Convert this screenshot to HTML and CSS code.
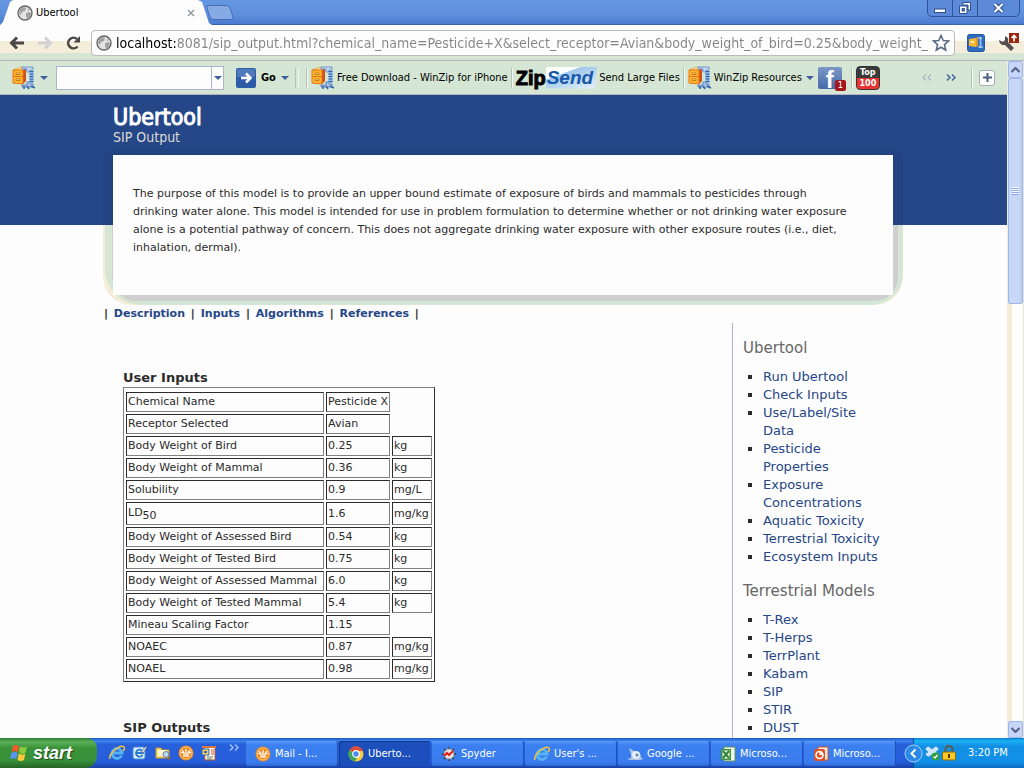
FILE: index.html
```html
<!DOCTYPE html>
<html lang="en">
<head>
<meta charset="utf-8">
<title>Ubertool</title>
<link rel="stylesheet" href="styles.css">
</head>
<body>
<svg class="defs" aria-hidden="true">
  <symbol id="winzip" viewBox="0 0 24 24">
    <path d="M1 4 9 1l5 1-2 2z" fill="#ffe9a0" stroke="#e58a1c" stroke-width=".6"/><path d="M1 4l10 0v14L1 17z" fill="#ffb52a"/><path d="M11 4l3-2v13l-3 3z" fill="#d1501a"/>
    <path d="M1 4v13l10 1V4zM1 10.500h10" stroke="#e8741a" fill="none"/><path d="M4 7h4v1.500H4zM4 13h4v1.500H4z" fill="#fff4b0" stroke="#b86a10" stroke-width=".8"/>
    <path d="M10 1h11v3h-3v2h-3V3h-5z" fill="#c4d9f3" stroke="#5d84be" stroke-width=".8"/><path d="M15 16h3v2h3v3H10v-2h5z" fill="#a9c6ea" stroke="#4a74b4" stroke-width=".8"/>
    <path d="M19.500 5v12" stroke="#8db4e6" stroke-width="4"/><path d="M19.500 5v12" stroke="#2d5fae" stroke-width="4" stroke-dasharray="1 1.500"/><path d="M12 20v3M15 20l2 3M19 20l4 2" stroke="#3563ad" stroke-width="1.500"/>
  </symbol>
  <symbol id="globe" viewBox="0 0 16 16">
    <circle cx="8" cy="8" r="7" fill="#e4e4e4" stroke="#666" stroke-width="1.4"/><path d="M3 4l4-2 2 1-1 3-3 1-1 3-2-2zM9 8l4-1 1 2-2 4-2 1-1-3zM11 3l2 2-2 1z" fill="#a2a2a2"/>
  </symbol>
  <symbol id="ie" viewBox="0 0 16 16">
    <path d="M12.6 10.5A5 5 0 1 1 13 8H4" fill="none" stroke="#55b4f4" stroke-width="2.8"/><path d="M1 14C-1 9 11-1 15 2c1 1 0 3-1 4" fill="none" stroke="#f5c33b" stroke-width="1.5"/>
  </symbol>
  <symbol id="mail" viewBox="0 0 16 16">
    <circle cx="8" cy="8" r="7.5" fill="#f08a1d"/><circle cx="8" cy="8" r="6" fill="none" stroke="#ffc77c"/><path d="M4 5l2 3v4M8 4v8M12 5l-2 3v4M3 8l3-1M13 8l-3-1" stroke="#fff" stroke-width="1.3" fill="none"/>
  </symbol>
</svg>

<div class="window">
  <header class="titlebar">
    <div class="tab"><svg class="i16"><use href="#globe"/></svg><span class="tab-name">Ubertool</span>
      <button class="plain" aria-label="Close tab"><svg width="8" height="8" viewBox="0 0 8 8"><path d="M1 1l6 6M7 1L1 7" stroke="#8c929c" stroke-width="1.3"/></svg></button></div>
    <button class="newtab" aria-label="New tab"></button>
    <div class="controls">
      <button aria-label="Minimize"><svg width="12" height="12" viewBox="0 0 12 12"><rect x=".5" y="7" width="11" height="3.5" fill="#fff" stroke="#2d4f8e"/></svg></button>
      <button aria-label="Restore"><svg width="14" height="14" viewBox="0 0 14 14"><path d="M5 1.5h7.5V9H10V4H5z" fill="#fff" stroke="#2d4f8e"/><path d="M1.500 5h7.500v7.500H1.500z" fill="#fff" stroke="#2d4f8e"/><path d="M4 7.500h2.500V10H4z" fill="#5b87d3" stroke="#2d4f8e"/></svg></button>
      <button class="close" aria-label="Close"><svg width="13" height="12" viewBox="0 0 13 12"><path d="M2.500 2l8 8M10.500 2l-8 8" stroke="#2d4f8e" stroke-width="4"/><path d="M2.500 2l8 8M10.500 2l-8 8" stroke="#fff" stroke-width="2"/></svg></button>
    </div>
  </header>

  <div class="addressbar">
    <button class="plain" aria-label="Back"><svg width="16" height="14" viewBox="0 0 16 14"><path d="M15 7H3M8 1.500L2.500 7 8 12.500" fill="none" stroke="#4a4747" stroke-width="3"/></svg></button>
    <button class="plain" aria-label="Forward"><svg width="16" height="14" viewBox="0 0 16 14"><path d="M1 7h12M8 1.500L13.500 7 8 12.500" fill="none" stroke="#d2d2d2" stroke-width="3"/></svg></button>
    <button class="plain" aria-label="Reload"><svg width="16" height="16" viewBox="0 0 16 16"><path d="M12.500 11.500A5.300 5.300 0 1 1 12 4" fill="none" stroke="#4a4747" stroke-width="2.600"/><path d="M15 1v6.500H8.500z" fill="#4a4747"/></svg></button>
    <div class="omnibox">
      <svg class="i16"><use href="#globe"/></svg>
      <input type="text" aria-label="Address" value="localhost:8081/sip_output.html?chemical_name=Pesticide+X&amp;select_receptor=Avian&amp;body_weight_of_bird=0.25&amp;body_weight_of_mammal=0.36">
      <button class="plain" aria-label="Bookmark"><svg width="18" height="18" viewBox="0 0 18 18"><path d="M9 1.500l2.200 5 5.300.5-4 3.600 1.200 5.400L9 13.200 4.300 16l1.200-5.400-4-3.600 5.300-.5z" fill="#fdfdfd" stroke="#5c6b87" stroke-width="1.600"/></svg></button>
    </div>
    <button class="plain" aria-label="WinZip"><svg width="18" height="18" viewBox="0 0 18 18"><rect x=".5" y=".5" width="17" height="17" rx="2" fill="#2b6bc0" stroke="#2457a0"/><path d="M2 5l7-1v9l-7-1z" fill="#f7b733"/><path d="M4 7h3v2H4z" fill="#fff2ae"/><path d="M9 4l2-1v9l-2 1z" fill="#e09a2c"/><path d="M13.500 3v11" stroke="#8fb8ea" stroke-width="2"/><path d="M11 4h4M11 13h5" stroke="#c7ddf6"/></svg></button>
    <button class="plain" aria-label="Settings"><svg width="23" height="22" viewBox="0 0 23 22"><path d="M2 8a5 5 0 0 0 6 5l6 6 3-3-6-6a5 5 0 0 0-3-6v4L6 10z" fill="#545050"/><rect x="12" y="1" width="10" height="10" fill="#9b260d"/><path d="M17 9.500V4M14.500 6L17 3.500 19.500 6" fill="none" stroke="#fff" stroke-width="1.700"/></svg></button>
  </div>

  <div class="view">
    <div class="page">
      <div class="winzipbar">
        <svg class="wz"><use href="#winzip"/></svg><span class="arrow"></span>
        <div class="search"><input type="text" aria-label="Search"><button aria-label="Search history"><span class="arrow"></span></button></div>
        <button class="go"><svg width="20" height="20" viewBox="0 0 20 20"><rect width="20" height="20" rx="2" fill="#2d5ca8"/><rect x="1" y="1" width="18" height="8" rx="1" fill="#5079bb"/><path d="M5 10h8M10 5.500l4.500 4.500L10 14.500" fill="none" stroke="#fff" stroke-width="2.500"/></svg>Go <span class="arrow"></span></button>
        <span class="grip grip-double"></span>
        <span class="grip"></span>
        <a href="#" class="tool"><svg class="wz"><use href="#winzip"/></svg>Free Download - WinZip for iPhone</a>
        <span class="grip"></span>
        <a href="#" class="tool zipsend"><span class="zip">Zip</span><span class="send">Send</span><span class="label">Send Large Files</span></a>
        <span class="grip"></span>
        <a href="#" class="tool resources"><svg class="wz"><use href="#winzip"/></svg>WinZip Resources</a><span class="arrow"></span>
        <a href="#" class="fb" aria-label="Facebook">f<span class="badge">1</span></a>
        <span class="grip"></span>
        <a href="#" class="top100"><span>Top</span><span>100</span></a>
        <div class="pager"><button class="plain off" aria-label="Previous"><svg width="10" height="7" viewBox="0 0 10 7"><path d="M4 .5l-3 3 3 3M9 .5l-3 3 3 3" fill="none" stroke="#a9b3c4" stroke-width="1.200"/></svg></button><button class="plain" aria-label="Next"><svg width="10" height="7" viewBox="0 0 10 7"><path d="M1 .5l3 3-3 3M6 .5l3 3-3 3" fill="none" stroke="#3f5f9c" stroke-width="1.400"/></svg></button><span class="grip"></span><button class="plus" aria-label="Add"><svg width="9" height="9" viewBox="0 0 9 9"><path d="M4.500 0v9M0 4.500h9" stroke="#4b6080" stroke-width="2"/></svg></button></div>
      </div>

      <div class="site">
        <div class="wrap">
          <h1>Ubertool</h1>
          <p class="subtitle">SIP Output</p>
          <div class="frame"><div class="intro"><p>The purpose of this model is to provide an upper bound estimate of exposure of birds and mammals to pesticides through drinking water alone. This model is intended for use in problem formulation to determine whether or not drinking water exposure alone is a potential pathway of concern. This does not aggregate drinking water exposure with other exposure routes (i.e., diet, inhalation, dermal).</p></div></div>
          <nav class="menu">| <a href="#">Description</a> | <a href="#">Inputs</a> | <a href="#">Algorithms</a> | <a href="#">References</a> |</nav>
          <div class="columns">
            <main>
              <h3>User Inputs</h3>
              <table>
                <tr><td>Chemical Name</td><td>Pesticide X</td></tr>
                <tr><td>Receptor Selected</td><td>Avian</td></tr>
                <tr><td>Body Weight of Bird</td><td>0.25</td><td>kg</td></tr>
                <tr><td>Body Weight of Mammal</td><td>0.36</td><td>kg</td></tr>
                <tr><td>Solubility</td><td>0.9</td><td>mg/L</td></tr>
                <tr class="tall"><td>LD<sub>50</sub></td><td>1.6</td><td>mg/kg</td></tr>
                <tr><td>Body Weight of Assessed Bird</td><td>0.54</td><td>kg</td></tr>
                <tr><td>Body Weight of Tested Bird</td><td>0.75</td><td>kg</td></tr>
                <tr><td>Body Weight of Assessed Mammal</td><td>6.0</td><td>kg</td></tr>
                <tr><td>Body Weight of Tested Mammal</td><td>5.4</td><td>kg</td></tr>
                <tr><td>Mineau Scaling Factor</td><td>1.15</td></tr>
                <tr><td>NOAEC</td><td>0.87</td><td>mg/kg</td></tr>
                <tr><td>NOAEL</td><td>0.98</td><td>mg/kg</td></tr>
              </table>
              <h3>SIP Outputs</h3>
            </main>
            <aside>
              <h2>Ubertool</h2>
              <ul>
                <li><a href="#">Run Ubertool</a></li><li><a href="#">Check Inputs</a></li><li><a href="#">Use/Label/Site Data</a></li><li><a href="#">Pesticide Properties</a></li><li><a href="#">Exposure Concentrations</a></li><li><a href="#">Aquatic Toxicity</a></li><li><a href="#">Terrestrial Toxicity</a></li><li><a href="#">Ecosystem Inputs</a></li>
              </ul>
              <h2>Terrestrial Models</h2>
              <ul>
                <li><a href="#">T-Rex</a></li><li><a href="#">T-Herps</a></li><li><a href="#">TerrPlant</a></li><li><a href="#">Kabam</a></li><li><a href="#">SIP</a></li><li><a href="#">STIR</a></li><li><a href="#">DUST</a></li>
              </ul>
            </aside>
          </div>
        </div>
      </div>
    </div>
    <div class="scrollbar">
      <button aria-label="Scroll up"><svg width="9" height="6" viewBox="0 0 9 6"><path d="M.5 5l4-4 4 4" fill="none" stroke="#4d6185" stroke-width="2"/></svg></button>
      <div class="thumb"><span></span></div>
      <button class="down" aria-label="Scroll down"><svg width="9" height="6" viewBox="0 0 9 6"><path d="M.5 1l4 4 4-4" fill="none" stroke="#4d6185" stroke-width="2"/></svg></button>
    </div>
  </div>

  <footer class="taskbar">
    <button class="start"><svg width="19" height="18" viewBox="0 0 19 18"><path d="M3 2q3-2 6 0L8 8Q5 6 1.500 8z" fill="#ef5b2c"/><path d="M10 2.500q4 2 7 0L15.500 9q-3 2-6.500-.5z" fill="#8ccb3d"/><path d="M1.300 9q3.500-2 6.500 0l-1.500 6Q3 13.500 0 15z" fill="#5b94f4"/><path d="M8.800 9.500q3.500 2 6.500.5L14 16q-3 2-6.500 0z" fill="#fbc93a"/></svg>start</button>
    <div class="quick">
      <svg class="i16"><use href="#ie"/></svg>
      <svg class="i16" viewBox="0 0 16 16"><rect x="1" y="2" width="12" height="12" rx="2" fill="#d8ecfa" stroke="#4d92d8"/><path d="M10.500 10A3.500 3.500 0 1 1 11 8H5" fill="none" stroke="#2a7ad0" stroke-width="1.800"/><path d="M9 7l5-6 1 1-4 6z" fill="#f4f4f4" stroke="#345" stroke-width=".6"/></svg>
      <svg class="i16" viewBox="0 0 16 16"><path d="M1 3h5l1 2h7v8H1z" fill="#fbdf7c" stroke="#c99a26"/><path d="M3 5h9v6H3z" fill="#fff7cf"/><circle cx="11" cy="9.500" r="3" fill="#b9dbf8" stroke="#6c7a8a"/><path d="M13 12l2 2" stroke="#b3661a" stroke-width="2"/></svg>
      <svg class="i16"><use href="#mail"/></svg>
      <svg class="i16" viewBox="0 0 16 16"><path d="M3 2h11v13H4z" fill="#fffdf2" stroke="#b55a2a"/><path d="M1 1h14v2H1z" fill="#d9783a"/><path d="M1 4h7v6H1z" fill="#f3d35a" stroke="#3566b8"/><path d="M3 6h3v2H3z" fill="#3566b8"/><path d="M10 5h3M10 7h3M10 9h3" stroke="#d7503a"/><path d="M6 12h6M6 14h5" stroke="#676"/></svg>
      <svg class="more" width="10" height="7" viewBox="0 0 10 7"><path d="M1 .5l3 3-3 3M6 .5l3 3-3 3" fill="none" stroke="#a9c8fa" stroke-width="1.300"/></svg>
    </div>
    <div class="tasks">
      <button><svg class="i16"><use href="#mail"/></svg>Mail - I...</button>
      <button class="active"><svg class="i16" viewBox="0 0 16 16"><circle cx="8" cy="8" r="7.500" fill="#f6cd3c"/><path d="M8 8L1.500 4.200A7.500 7.500 0 0 1 15 5H8z" fill="#dd4b39"/><path d="M1.500 4.200A7.500 7.500 0 0 0 7 15.400L10 10z" fill="#3fa65a"/><circle cx="8" cy="8" r="3.300" fill="#4b8cf0" stroke="#fff" stroke-width="1.200"/></svg>Uberto...</button>
      <button><svg class="i16" viewBox="0 0 16 16"><path d="M1 8h14M8 1v14M3 3l10 10M13 3L3 13" stroke="#333" stroke-width="1.300"/><circle cx="8" cy="8" r="5" fill="#e6e6e6" stroke="#999"/><path d="M3 10l3-3 2 2 4-4" stroke="#e5201b" stroke-width="2.200" fill="none"/></svg>Spyder</button>
      <button><svg class="i16"><use href="#ie"/></svg>User's ...</button>
      <button><svg class="i16" viewBox="0 0 16 16"><path d="M0 13l4-1 0-4-2-6 5 3q7 0 7 6l2 2-3 1H7l-4 0z" fill="#a9c4e6"/><circle cx="9" cy="9" r="4" fill="#e6eef6"/><circle cx="10" cy="9" r="1.500" fill="#5e7fae"/></svg>Google ...</button>
      <button><svg class="i16" viewBox="0 0 16 16"><path d="M4 1h11v14H4z" fill="#f2f7ee" stroke="#63975c"/><path d="M1 3h10v11H1z" fill="#3b8f3f"/><path d="M2.500 4.500h7v8h-7z" fill="#f2f7ee"/><path d="M3 5l6 7M9 5l-6 7" stroke="#2f8535" stroke-width="2"/></svg>Microso...</button>
      <button><svg class="i16" viewBox="0 0 16 16"><path d="M5 1h10v13H5z" fill="#fbe9e0" stroke="#d1542c"/><rect x="1" y="3" width="11" height="12" rx="2" fill="#dc5228"/><circle cx="6.500" cy="9" r="3.500" fill="none" stroke="#fff" stroke-width="1.600"/><path d="M6.500 9V5.500A3.500 3.500 0 0 1 10 9z" fill="#fff"/></svg>Microso...</button>
    </div>
    <div class="tray">
      <button class="plain" aria-label="Show hidden icons"><svg width="19" height="19" viewBox="0 0 19 19"><circle cx="9.500" cy="9.500" r="8.500" fill="#2b8ae8" stroke="#a5d2fb"/><path d="M11.500 5.500l-4 4 4 4" fill="none" stroke="#fff" stroke-width="2"/></svg></button>
      <svg class="i16" viewBox="0 0 16 16"><path d="M4 1l4 3 4-3 3 3-3 3 3 2-4 3-3-2-4 2-3-3 3-2-3-3z" fill="#cfe7fb" stroke="#4f9de0"/><circle cx="11.500" cy="11.500" r="4" fill="#2f9e3a"/><path d="M9.500 11.500l1.500 1.500 2.500-3" fill="none" stroke="#fff" stroke-width="1.300"/></svg>
      <svg class="i16" viewBox="0 0 16 16"><path d="M4.500 8V4a3.500 3 0 0 1 7 0v4" fill="none" stroke="#5b5b4c" stroke-width="2"/><rect x="1.500" y="7" width="13" height="8" rx="1" fill="#fcc825" stroke="#8a6a10"/><path d="M8 9v4" stroke="#4d3c08" stroke-width="2"/></svg>
      <time>3:20 PM</time>
    </div>
  </footer>
</div>
</body>
</html>
```

FILE: styles.css
```css
* { box-sizing: border-box; }
body { margin: 0; font: 11px/18px "DejaVu Sans", Verdana, sans-serif; color: #2b2b2b; background: #fdfdfd; }
h1, h2, h3, p, ul { margin: 0; padding: 0; }
button { font: inherit; padding: 0; border: 0; cursor: pointer; }
a { color: #254687; text-decoration: none; }
svg { display: block; flex: none; }
.defs { position: absolute; width: 0; height: 0; }
.plain { background: none; display: flex; align-items: center; }
.i16 { width: 16px; height: 16px; }
.window { height: 100vh; display: flex; flex-direction: column; overflow: hidden; }

.titlebar { flex: none; height: 25px; display: flex; background: linear-gradient(#6596e0, #6090dc 60%, #4a7bd0); border-bottom: 1px solid #3763b3; font: 12px/24px "DejaVu Sans Condensed", Tahoma, sans-serif; }
.tab { width: 212px; height: 25px; padding: 0 17px; display: flex; align-items: center; gap: 3px; color: #000; background: #fdfdfd; clip-path: polygon(0 100%, 3px 88%, 10px 8%, 13px 0, 198px 0, 202px 8%, 209px 92%, 100% 100%); }
.tab-name { flex: 1; font-size: 11px; }
.newtab { width: 24px; height: 15px; margin: 5px 0 0 -4px; background: #86aae3; border: 1px solid #436db7; border-radius: 3px 4px 4px 4px; transform: skewX(18deg); }
.controls { margin-left: auto; margin-right: 4px; height: 17px; display: flex; border: 1px solid #2f539b; border-top: 0; border-radius: 0 0 5px 5px; background: #5d8ad8; }
.controls button { width: 25px; background: none; display: grid; place-items: center; border-right: 1px solid #2f539b; }
.controls .close { width: 41px; border: 0; }

.addressbar { flex: none; height: 36px; padding: 0 4px 0 9px; display: flex; align-items: center; gap: 12px; background: linear-gradient(#fdfdfd 16px, #f3edd9 16px, #f3edd9 28px, #d5e6d5 28px); border-bottom: 1px solid #b4b4c4; }
.omnibox { flex: 1; min-width: 0; height: 26px; display: flex; align-items: center; gap: 4px; padding: 0 4px; background: #fdfdfd; border: 1px solid #b7bcb9; border-radius: 4px; margin-left: -2px; }
.omnibox input { flex: 1; min-width: 0; height: 24px; padding: 0; border: 0; outline: 0; font: 14px/24px "DejaVu Sans Condensed", Tahoma, sans-serif; color: transparent; background: linear-gradient(90deg, #000 61px, #858585 61px); -webkit-background-clip: text; background-clip: text; }

.view { flex: 1; min-height: 0; display: flex; }
.page { flex: 1; min-width: 0; overflow: hidden; }
.winzipbar { height: 34px; display: flex; align-items: center; gap: 2px; padding: 0 12px; background: #d5e6d5; border-bottom: 1px solid #b4b4c4; font: 11px/18px "DejaVu Sans Condensed", Tahoma, sans-serif; color: #000; white-space: nowrap; }
.wz { width: 24px; height: 24px; }
.arrow { flex: none; width: 7px; border: solid transparent; border-width: 4px 4px 0; border-top-color: #3f5f9c; }
.winzipbar > .wz { margin-right: 2px; }
.search { width: 168px; height: 24px; margin: 0 10px 0 6px; display: flex; background: #fdfdfd; border: 1px solid #aab4cc; }
.search input { flex: 1; min-width: 0; border: 0; background: none; }
.search button { width: 12px; display: grid; place-items: center; background: #fdfdfd; border-left: 1px solid #aab4cc; }
.go { display: flex; align-items: center; gap: 5px; background: none; font-weight: bold; color: #000; }
.grip { flex: none; width: 2px; height: 20px; margin: 0 1px; border-left: 1px solid #b6c2b9; border-right: 1px solid #f4f7f0; }
.grip-double { width: 4px; margin: 0 4px; }
.tool { display: flex; align-items: center; gap: 2px; color: #000; }
.zip, .send { font: bold 20px/22px "Liberation Sans", Arial, sans-serif; color: #000; }
.zip { -webkit-text-stroke: 1px #000; }
.zipsend { gap: 0; }
.send { padding: 0 4px 0 1px; color: #1558a8; font-style: italic; font-size: 19px; background: linear-gradient(160deg, #fff 30%, #9fc6ee 32%, #c9dff5 70%, #e6f1fb); clip-path: polygon(0 0, 100% 0, 95% 100%, 0 100%); }
.label { padding-left: 2px; }
.resources { padding-right: 2px; }
.fb { position: relative; width: 24px; height: 22px; margin: 0 6px 0 2px; background: linear-gradient(#7d98c6, #456aa8); color: #fff; font: bold 24px/26px "Liberation Sans", Arial, sans-serif; text-align: center; border-radius: 2px; }
.badge { position: absolute; right: -4px; bottom: -2px; width: 11px; height: 11px; border-radius: 2px; background: #a5161d; font: 9px/11px "DejaVu Sans", sans-serif; }
.top100 { width: 24px; height: 24px; display: grid; border-radius: 4px; overflow: hidden; background: linear-gradient(#3a3a3a 50%, #ea3434 50%); border: 1px solid #333; color: #fff; font: bold 9px/11px "DejaVu Sans Condensed", sans-serif; text-align: center; }
.pager { margin-left: auto; display: flex; align-items: center; gap: 14px; }
.pager .grip { margin-right: -8px; }
.plus { width: 16px; height: 16px; display: grid; place-items: center; background: #fdfdfd; border: 1px solid #a9aeb4; border-radius: 3px; }

.site { background: linear-gradient(#254687 130px, #fdfdfd 130px); }
.wrap { width: 801px; max-width: 100%; margin: 0 auto; padding-right: 1px; }
h1 { padding: 9px 10px 0; color: #fff; font: 23px/26px "DejaVu Sans Condensed", Tahoma, sans-serif; -webkit-text-stroke: 1px #fff; }
.subtitle { padding: 0 10px; color: #dcdad4; font: 14px/14px "DejaVu Sans Condensed", Tahoma, sans-serif; }
.frame { position: relative; isolation: isolate; margin-top: 5px; padding: 6px 10px 10px; border-radius: 12px 12px 28px 28px; background: linear-gradient(#234282 76px, #f3edd9 76px); overflow: hidden; }
.frame::before, .frame::after { content: ""; position: absolute; z-index: -1; }
.frame::before { inset: 76px 0 0 2px; background: #d5e6d5; border-radius: 0 0 32px 36px; }
.frame::after { inset: 76px 5px 4px 9px; background: #cfcfcf; border-radius: 0 0 24px 24px; }
.intro { min-height: 140px; padding: 30px 42px 30px 20px; background: #fdfdfd; }
.menu { font-weight: bold; padding-left: 1px; }
.menu a { padding: 0 2px; }
.columns { display: flex; align-items: flex-start; }
main { flex: 1; padding: 46px 20px 0; }
h3 { font-size: 13px; line-height: 18px; }
table { margin-bottom: 37px; padding-top: 2px; border: 1px solid; border-color: #808080 #2b2b2b #2b2b2b #808080; border-spacing: 2px; }
td { padding: 0 1px; height: 20px; border: 1px solid; border-color: #2b2b2b #808080 #808080 #2b2b2b; white-space: nowrap; }
td:first-child { min-width: 198px; }
td:last-child { min-width: 40px; }
.tall td { height: 23px; }
sub { font-size: 11px; line-height: 12px; }
aside { width: 171px; padding: 16px 20px 0 10px; border-left: 1px solid #b0b4be; }
aside h2 { margin-bottom: 11px; color: #666; font: 15px/18px "DejaVu Sans", Verdana, sans-serif; white-space: nowrap; }
aside ul { padding-left: 20px; margin-bottom: 16px; list-style: square; font: 13px/18px "DejaVu Sans", Verdana, sans-serif; }

.scrollbar { width: 17px; flex: none; display: flex; flex-direction: column; background: linear-gradient(90deg, #f3edd9 5px, #fdfdfd 5px, #fdfdfd 16px, #e9e4d2 16px); }
.scrollbar button, .thumb { width: 15px; margin-left: 1px; border: 1px solid #9db7ea; border-radius: 2px; background: #c6d5f8; display: grid; place-items: center; }
.scrollbar button { height: 17px; }
.thumb { height: 226px; background: linear-gradient(90deg, #c8d6f8 80%, #b4caf5); }
.thumb span { width: 7px; height: 8px; background: repeating-linear-gradient(#fff 0 1px, #8cabe6 1px 2px); }
.scrollbar .down { margin-top: auto; }

.taskbar { flex: none; height: 30px; display: flex; background: linear-gradient(#1b55c8, #3f86ee 3px, #2860dc 6px, #255ddb 80%, #1941a5); color: #fff; font: 11px/26px "DejaVu Sans Condensed", Tahoma, sans-serif; }
.start { width: 97px; display: flex; align-items: center; gap: 4px; padding-left: 10px; border-radius: 0 10px 12px 0; background: linear-gradient(#2f7d33, #5bb058 4px, #3a9239 10px, #38903a 75%, #236426); color: #fff; font: italic bold 18px/26px "Liberation Sans", Arial, sans-serif; text-shadow: 1px 1px 1px #1c4d1d; }
.quick { width: 149px; display: flex; align-items: center; gap: 7px; padding-left: 12px; }
.more { align-self: flex-start; margin: 6px 0 0 5px; }
.tasks { flex: 1; min-width: 0; display: flex; gap: 2px; padding: 3px 0 2px; }
.tasks button { flex: 1; min-width: 0; display: flex; align-items: center; gap: 4px; padding-left: 9px; border-radius: 2px; background: linear-gradient(#5c9af6, #3b7ff0 4px, #3a7cec 85%, #2f69d4); color: #fff; white-space: nowrap; overflow: hidden; box-shadow: 1px 0 #1f4fb8; }
.tasks .active { background: #1c4fbb; box-shadow: inset 1px 1px 1px #123a8c; }
.tray { width: 111px; margin-left: 18px; display: flex; align-items: center; gap: 1px; background: linear-gradient(#0f7fd0, #19b3f4 3px, #1290e4 8px, #118fe8 80%, #0d6cc0); border-left: 1px solid #0f4fa8; }
.tray .plain { margin-left: -10px; }
.tray time { margin-left: 10px; }
```
